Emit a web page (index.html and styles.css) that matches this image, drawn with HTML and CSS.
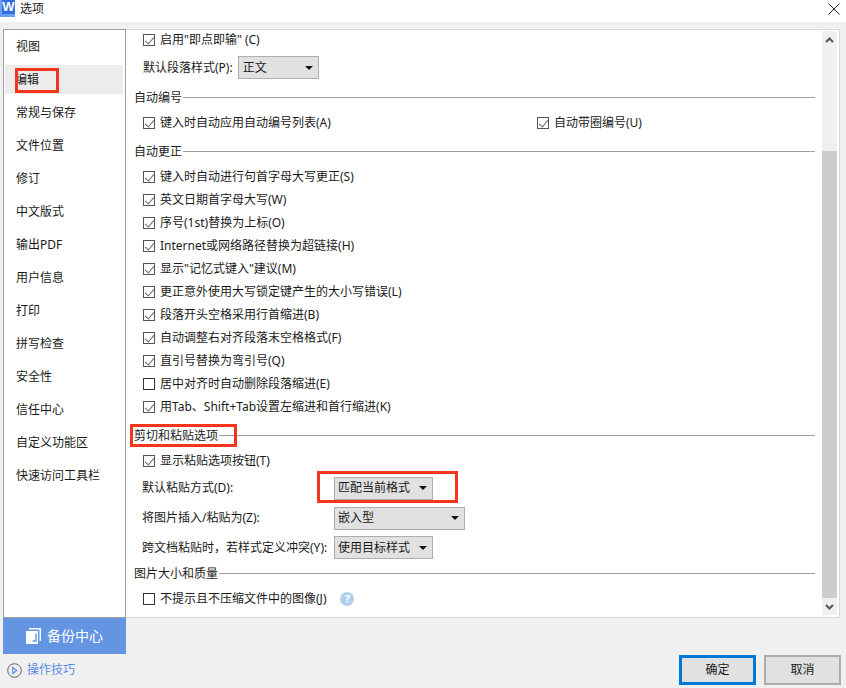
FILE: index.html
```html
<!DOCTYPE html>
<html lang="zh-CN">
<head>
<meta charset="utf-8">
<title>选项</title>
<link rel="stylesheet" href="styles.css">
</head>
<body>
<div class="app">
  <header class="titlebar">
    <div class="logo"><span class="logo-w">W</span></div>
    <span class="title">选项</span>
    <svg class="close" width="12" height="12" viewBox="0 0 12 12"><path d="M.5.5l11 11M11.500.5l-11 11" stroke="#222" stroke-width="1" fill="none"/></svg>
  </header>
  <main class="main">
    <nav class="nav">
      <div class="nav-item">视图</div>
      <div class="nav-item active"><span class="nav-edit">编辑</span><span class="mark mark-nav"></span></div>
      <div class="nav-item">常规与保存</div>
      <div class="nav-item">文件位置</div>
      <div class="nav-item">修订</div>
      <div class="nav-item">中文版式</div>
      <div class="nav-item">输出PDF</div>
      <div class="nav-item">用户信息</div>
      <div class="nav-item">打印</div>
      <div class="nav-item">拼写检查</div>
      <div class="nav-item">安全性</div>
      <div class="nav-item">信任中心</div>
      <div class="nav-item">自定义功能区</div>
      <div class="nav-item">快速访问工具栏</div>
    </nav>
    <section class="panel">
      <div class="content">
        <label class="check first"><span class="box on"></span>启用"即点即输" (C)</label>
        <div class="field gap-7"><span class="lab">默认段落样式(P):</span><div class="select sel-style"><span>正文</span><i class="caret"></i></div></div>

        <div class="heading after-select"><span>自动编号</span></div>
        <div class="two">
          <label class="check"><span class="box on"></span>键入时自动应用自动编号列表(A)</label>
          <label class="check"><span class="box on"></span>自动带圈编号(U)</label>
        </div>

        <div class="heading"><span>自动更正</span></div>
        <div class="list">
          <label class="check"><span class="box on"></span>键入时自动进行句首字母大写更正(S)</label>
          <label class="check"><span class="box on"></span>英文日期首字母大写(W)</label>
          <label class="check"><span class="box on"></span>序号(1st)替换为上标(O)</label>
          <label class="check"><span class="box on"></span>Internet或网络路径替换为超链接(H)</label>
          <label class="check"><span class="box on"></span>显示"记忆式键入"建议(M)</label>
          <label class="check"><span class="box on"></span>更正意外使用大写锁定键产生的大小写错误(L)</label>
          <label class="check"><span class="box on"></span>段落开头空格采用行首缩进(B)</label>
          <label class="check"><span class="box on"></span>自动调整右对齐段落末空格格式(F)</label>
          <label class="check"><span class="box on"></span>直引号替换为弯引号(Q)</label>
          <label class="check"><span class="box"></span>居中对齐时自动删除段落缩进(E)</label>
          <label class="check"><span class="box on"></span>用Tab、Shift+Tab设置左缩进和首行缩进(K)</label>
        </div>

        <div class="heading"><span>剪切和粘贴选项</span><span class="mark mark-head"></span></div>
        <label class="check"><span class="box on"></span>显示粘贴选项按钮(T)</label>
        <div class="field gap-5 h-22"><span class="lab lab-wide">默认粘贴方式(D):</span><div class="select sel-mid h-22"><span>匹配当前格式</span><i class="caret"></i></div><span class="mark mark-sel"></span></div>
        <div class="field gap-7 h-24"><span class="lab lab-wide">将图片插入/粘贴为(Z):</span><div class="select sel-wide h-24"><span>嵌入型</span><i class="caret"></i></div></div>
        <div class="field gap-6"><span class="lab lab-wide">跨文档粘贴时，若样式定义冲突(Y):</span><div class="select sel-mid"><span>使用目标样式</span><i class="caret"></i></div></div>

        <div class="heading tight"><span>图片大小和质量</span></div>
        <label class="check"><span class="box"></span>不提示且不压缩文件中的图像(J)<span class="help">?</span></label>
      </div>
      <div class="scrollbar">
        <div class="arrow"><svg width="9" height="6" viewBox="0 0 9 6"><path d="M1 5l3.500-3.500L8 5" stroke="#555" stroke-width="2" fill="none"/></svg></div>
        <div class="track"><div class="thumb"></div></div>
        <div class="arrow"><svg width="9" height="6" viewBox="0 0 9 6"><path d="M1 1l3.500 3.500L8 1" stroke="#555" stroke-width="2" fill="none"/></svg></div>
      </div>
    </section>
  </main>
  <footer class="footer">
    <div class="side">
      <div class="backup">
        <svg class="backup-icon" width="15" height="16" viewBox="0 0 15 16"><path d="M3 0h12v13h-1.500V1.500H3z" fill="#fff"/><path d="M0 3h12v13H0z" fill="#fff"/><path d="M10 5.500v7.500H6.500" stroke="#6495e3" stroke-width="1.400" fill="none"/></svg>
        <span>备份中心</span>
      </div>
      <div class="tips">
        <svg width="15" height="15" viewBox="0 0 15 15"><circle cx="7.500" cy="7.500" r="6.800" stroke="#666" stroke-width="1" fill="none"/><path d="M5.800 4.500l4 3-4 3z" stroke="#5b8ce8" stroke-width="1.200" fill="none"/></svg>
        <span>操作技巧</span>
      </div>
    </div>
    <div class="buttons">
      <button class="btn primary">确定</button>
      <button class="btn">取消</button>
    </div>
  </footer>
</div>
</body>
</html>
```

FILE: styles.css
```css
* { box-sizing: border-box; }
html, body { margin: 0; padding: 0; }
body {
  width: 846px;
  height: 688px;
  overflow: hidden;
  background: #f0f0f0;
  color: #1a1a1a;
  font: 12px/16px "Noto Sans", "Noto Sans CJK SC", sans-serif;
}
.app { display: flex; flex-direction: column; height: 688px; }

.titlebar {
  height: 22px;
  background: #fff;
  display: flex;
  align-items: flex-start;
  flex: none;
}
.logo {
  width: 15px;
  height: 17px;
  background: #2f6fe0;
  border-left: 2px solid #6f9df0;
  border-bottom: 3px solid #6f9df0;
  display: flex;
  align-items: center;
  justify-content: center;
}
.logo-w { color: #fff; font: bold 13px/14px "Liberation Sans", sans-serif; }
.title { margin: 1px 0 0 5px; font-size: 12px; line-height: 16px; }
.close { margin: 3px 6px 0 auto; }

.main {
  display: flex;
  height: 589px;
  margin: 7px 6px 0 3px;
  flex: none;
}
.nav {
  width: 123px;
  flex: none;
  background: #fff;
  border: 1px solid #a0a0a0;
}
.nav-item {
  height: 33px;
  display: flex;
  align-items: center;
  margin-right: 2px;
  margin-left: 1px;
  padding-left: 11px;
  position: relative;
}
.nav-item.active { background: #ececec; margin-top: 2px; height: 29px; margin-bottom: 2px; }
.nav-edit { margin-left: -1px; }
.mark { position: absolute; border: 3px solid #f5361c; pointer-events: none; }
.mark-nav { left: 10px; top: 3px; width: 44px; height: 25px; }

.panel {
  flex: 1;
  display: flex;
  background: #fff;
  border: 1px solid #d9d9d9;
  border-left: 0;
  padding: 1px 2px 2px 0;
  min-width: 0;
}
.content { flex: 1; padding-left: 8px; padding-right: 7px; overflow: hidden; }

.check {
  display: flex;
  align-items: center;
  height: 23px;
  padding-left: 9px;
}
.check.first { height: 18px; }
.box {
  width: 12px;
  height: 12px;
  border: 1px solid #333;
  background: #fff;
  margin-right: 5px;
  flex: none;
  position: relative;
}
.box.on { border-color: #555; }
.box.on::after {
  content: "";
  position: absolute;
  left: 3px;
  top: 0;
  width: 4px;
  height: 8px;
  border: solid #666;
  border-width: 0 1.5px 1.5px 0;
  transform: rotate(40deg);
}

.field { display: flex; align-items: center; height: 23px; padding-left: 9px; position: relative; }
.gap-5 { margin-top: 5px; }
.gap-7 { margin-top: 7px; }
.gap-6 { margin-top: 6px; }
.h-22 { height: 22px; }
.h-24 { height: 24px; }
.lab { margin-right: 5px; }
.lab-wide { width: 191px; margin: 0 1px 0 -1px; white-space: nowrap; }
.select {
  height: 23px;
  background: #e1e1e1;
  border: 1px solid #adadad;
  display: flex;
  align-items: center;
  justify-content: space-between;
  padding: 0 5px 0 3px;
}
.sel-style { width: 81px; padding-left: 4px; }
.sel-mid { width: 99px; }
.sel-wide { width: 131px; }
.caret {
  width: 0;
  height: 0;
  border-left: 4px solid transparent;
  border-right: 4px solid transparent;
  border-top: 4px solid #111;
}

.heading {
  display: flex;
  align-items: center;
  height: 20px;
  margin-top: 8px;
  margin-bottom: 3px;
  position: relative;
}
.heading.after-select { margin-top: 9px; }
.heading.tight { margin-top: 5px; }
.heading::after { content: ""; flex: 1; height: 1px; background: #a0a0a0; margin: 0 0 2px 1px; }
.mark-head { left: -4px; top: -2px; width: 107px; height: 23px; }
.mark-sel { left: 183px; top: -6px; width: 141px; height: 32px; }
.two { display: grid; grid-template-columns: 394px 1fr; height: 23px; }
.list { display: flex; flex-direction: column; }
.help {
  width: 14px;
  height: 14px;
  margin-left: 14px;
  border-radius: 50%;
  background: #b3cfee;
  color: #fff;
  font-weight: bold;
  font-size: 11px;
  line-height: 14px;
  text-align: center;
}

.scrollbar { width: 15px; flex: none; background: #f0f0f0; display: flex; flex-direction: column; }
.arrow { height: 17px; display: flex; align-items: center; justify-content: center; flex: none; }
.track { flex: 1; padding: 103px 0 0; }
.thumb { height: 447px; background: #cdcdcd; }

.footer { display: flex; flex: 1; padding: 0 5px 0 3px; justify-content: space-between; }
.side { width: 123px; }
.backup {
  height: 36px;
  background: #6495e3;
  color: #fff;
  display: flex;
  align-items: center;
  gap: 6px;
  padding-left: 23px;
  font-size: 14px;
}
.backup-icon { flex: none; }
.tips {
  display: flex;
  align-items: center;
  gap: 5px;
  margin-top: 8px;
  margin-left: 4px;
  height: 16px;
  color: #5b8ce8;
}
.buttons { display: flex; gap: 8px; padding-top: 37px; }
.btn {
  width: 77px;
  height: 30px;
  padding: 0;
  background: #e1e1e1;
  border: 2px solid #adadad;
  color: #1a1a1a;
  font: inherit;
}
.btn.primary { border: 3px solid #0078d7; }
```
